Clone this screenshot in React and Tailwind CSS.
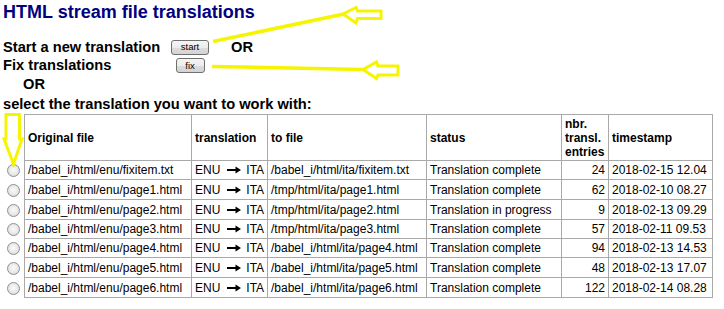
import React from 'react';

const rows = [
  { src: '/babel_i/html/enu/fixitem.txt', dst: '/babel_i/html/ita/fixitem.txt', status: 'Translation complete', n: 24, ts: '2018-02-15 12.04', h: 'h-[19px]' },
  { src: '/babel_i/html/enu/page1.html', dst: '/tmp/html/ita/page1.html', status: 'Translation complete', n: 62, ts: '2018-02-10 08.27', h: 'h-[20px]' },
  { src: '/babel_i/html/enu/page2.html', dst: '/tmp/html/ita/page2.html', status: 'Translation in progress', n: 9, ts: '2018-02-13 09.29', h: 'h-[20px]' },
  { src: '/babel_i/html/enu/page3.html', dst: '/tmp/html/ita/page3.html', status: 'Translation complete', n: 57, ts: '2018-02-11 09.53', h: 'h-[19px]' },
  { src: '/babel_i/html/enu/page4.html', dst: '/babel_i/html/ita/page4.html', status: 'Translation complete', n: 94, ts: '2018-02-13 14.53', h: 'h-[19px]' },
  { src: '/babel_i/html/enu/page5.html', dst: '/babel_i/html/ita/page5.html', status: 'Translation complete', n: 48, ts: '2018-02-13 17.07', h: 'h-[20px]' },
  { src: '/babel_i/html/enu/page6.html', dst: '/babel_i/html/ita/page6.html', status: 'Translation complete', n: 122, ts: '2018-02-14 08.28', h: 'h-[20px]' },
];

const cell = 'border-r border-b border-[#a9a9a9] px-[3px] align-middle whitespace-nowrap';
const head = 'border-r border-b border-t border-[#a9a9a9] px-[3px] align-middle text-left font-bold h-[47px]';

function Btn({ label, w }) {
  return (
    <button
      className={`${w} h-[15px] rounded-[3px] border border-[#707070] bg-[linear-gradient(#f5f5f5,#ececec_50%,#dddddd_51%,#d3d3d3)] text-[9.5px] font-normal leading-none text-black flex items-center justify-center`}
    >
      {label}
    </button>
  );
}

function Radio() {
  return (
    <span className="block ml-[4px] w-[13px] h-[13px] rounded-full border border-[#8e8f8f] bg-[radial-gradient(circle_at_50%_45%,#fbfbfb_0%,#e8e8e8_55%,#cfcfcf_100%)]" />
  );
}

function RightArrow() {
  return (
    <svg width="14" height="8" viewBox="0 0 14 8" className="shrink-0">
      <path d="M0 3h8.5V0.5L14 4l-5.5 3.5V5H0z" fill="#000" />
    </svg>
  );
}

export default function App() {
  return (
    <div className="relative w-[724px] h-[309px] overflow-hidden bg-white text-black font-['Liberation_Sans',Arial,sans-serif]">
      <div className="pl-[3px]">
        <h1 className="h-[38px] pt-[1.5px] text-[18px] leading-[21px] font-bold text-[#000080]">
          HTML stream file translations
        </h1>

        <div className="grid grid-cols-[165px_44px_auto] grid-rows-[18px_19px] text-[14.67px] font-bold">
          <div className="leading-[18px]">Start a new translation</div>
          <div className="flex items-center justify-center"><Btn label="start" w="w-[38px]" /></div>
          <div className="leading-[18px] pl-[19px]">OR</div>
          <div className="leading-[19px]">Fix translations</div>
          <div className="flex items-center justify-center"><Btn label="fix" w="w-[29px]" /></div>
          <div />
        </div>
        <div className="h-[19px] leading-[19px] pl-[20px] text-[14.67px] font-bold">OR</div>
        <div className="h-[20px] leading-[20px] text-[14.67px] font-bold">select the translation you want to work with:</div>

        <table className="w-[710px] table-fixed border-separate border-spacing-0 text-[12px] leading-[14px]">
          <thead>
            <tr>
              <th className="w-[21px] p-0" />
              <th className={`${head} border-l w-[168px]`}>Original file</th>
              <th className={`${head} w-[76px]`}>translation</th>
              <th className={`${head} w-[159px]`}>to file</th>
              <th className={`${head} w-[135px]`}>status</th>
              <th className={`${head} w-[47px] pr-[2px]`}>nbr. transl. entries</th>
              <th className={`${head} w-[104px]`}>timestamp</th>
            </tr>
          </thead>
          <tbody>
            {rows.map((r) => (
              <tr key={r.src}>
                <td className={`${r.h} p-0 align-middle`}><Radio /></td>
                <td className={`${cell} ${r.h} border-l`}>{r.src}</td>
                <td className={`${cell} ${r.h} pr-0`}>
                  <div className="flex items-center">
                    <span>ENU</span>
                    <span className="ml-[7px] mr-[5px]"><RightArrow /></span>
                    <span>ITA</span>
                  </div>
                </td>
                <td className={`${cell} ${r.h}`}>{r.dst}</td>
                <td className={`${cell} ${r.h}`}>{r.status}</td>
                <td className={`${cell} ${r.h} text-right`}>{r.n}</td>
                <td className={`${cell} ${r.h}`}>{r.ts}</td>
              </tr>
            ))}
          </tbody>
        </table>
      </div>

      {/* yellow hand-drawn annotation arrows */}
      <svg className="absolute inset-0 pointer-events-none" width="724" height="309" viewBox="0 0 724 309">
        <g stroke="#f5f500" fill="none" strokeLinejoin="miter">
          <line x1="213" y1="41.5" x2="344" y2="14" strokeWidth="3.5" />
          <polygon points="343,14 356,7.5 357.5,11 381,11 381,18.5 357.5,18.5 356,23" strokeWidth="3" />
          <line x1="212" y1="66.5" x2="363" y2="69.5" strokeWidth="3.5" />
          <polygon points="363,69.5 376.5,62 378,66 398,66 398,75 378,75 376.5,78.5" strokeWidth="3" />
          <polygon points="6,114.5 19.5,114.5 19.5,139 22,139 13.5,164 4,139 6,139" strokeWidth="3" />
        </g>
      </svg>
    </div>
  );
}
